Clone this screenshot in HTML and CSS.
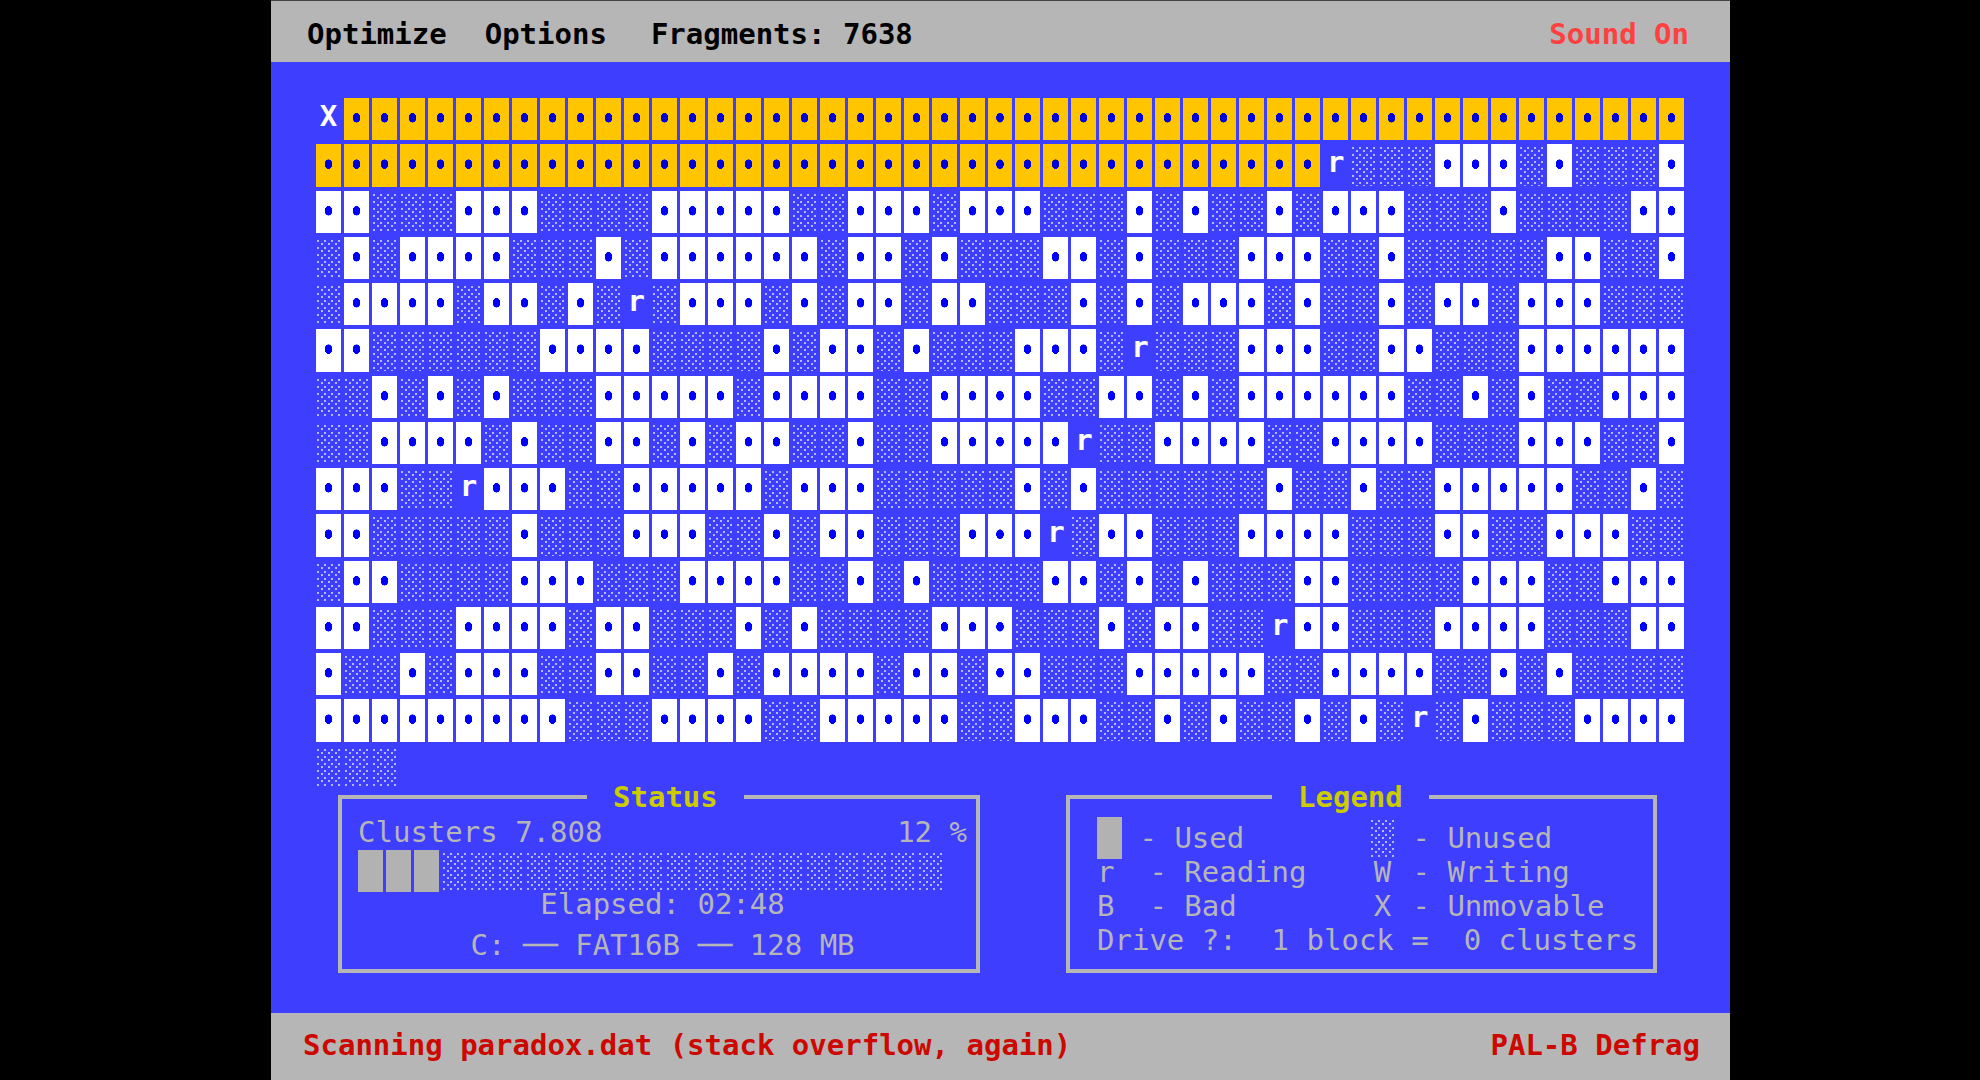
FILE: index.html
```html
<!DOCTYPE html>
<html lang="en">
<head>
  <meta charset="UTF-8">
  <meta name="viewport" content="width=device-width, initial-scale=1.0">
  <title>PAL-B Defrag</title>
  <link rel="stylesheet" href="styles.css">
</head>
<body>
  <div class="screen">
    <header class="bar topbar">
      <nav class="menu">
        <button type="button">Optimize</button>
        <button type="button">Options</button>
      </nav>
      <span class="fragments">Fragments: 7638</span>
      <button type="button" class="sound">Sound On</button>
    </header>

    <main>
      <div class="map" id="map"></div>

      <div class="panels">
        <fieldset class="panel status">
          <legend>Status</legend>
          <div class="clusters">
            <span>Clusters 7.808</span>
            <span>12 %</span>
          </div>
          <div class="progress" id="progress"></div>
          <p class="elapsed">Elapsed: 02:48</p>
          <p class="drive">C: ── FAT16B ── 128 MB</p>
        </fieldset>

        <fieldset class="panel keys">
          <legend>Legend</legend>
          <ul class="key-list">
            <li><span class="block full"></span> - Used</li>
            <li><span class="key"><span class="block unused"></span></span> - Unused</li>
            <li>r  - Reading</li>
            <li><span class="key">W</span> - Writing</li>
            <li>B  - Bad</li>
            <li><span class="key">X</span> - Unmovable</li>
          </ul>
          <p class="scale">Drive ?:  1 block =  0 clusters</p>
        </fieldset>
      </div>
    </main>

    <footer class="bar bottombar">
      <span>Scanning paradox.dat (stack overflow, again)</span>
      <span>PAL-B Defrag</span>
    </footer>
  </div>

  <script src="script.js"></script>
</body>
</html>
```
FILE: styles.css
```css
* {
  box-sizing: border-box;
}
body {
  margin: 0;
  padding: 0 250px 0 271px;
  background: #000;
  color: #b6b6b6;
  font-family: "DejaVu Sans Mono", monospace;
  font-size: 29px;
  line-height: 34px;
}
p, ul {
  margin: 0;
  padding: 0;
}
button {
  padding: 0;
  border: none;
  background: none;
  color: inherit;
  font: inherit;
  cursor: pointer;
}
.screen {
  display: flex;
  flex-direction: column;
  min-height: 100vh;
  background: #3e3eff;
}

/* top and bottom bars */
.bar {
  display: flex;
  align-items: center;
  background: #b6b6b6;
  font-weight: bold;
  white-space: nowrap;
}
.topbar {
  height: 62px;
  padding: 4px 41px 0 36px;
  border-top: 1px solid #444;
  color: #000;
}
.menu {
  display: flex;
  gap: 38px;
}
.fragments {
  margin-left: 44px;
}
.sound {
  margin-left: auto;
  color: #ff4040;
}
.bottombar {
  justify-content: space-between;
  height: 67px;
  padding: 0 30px 4px 32px;
  color: #cc0800;
}

main {
  flex: 1;
  display: flex;
  flex-direction: column;
  padding: 36px 0 40px;
}

/* disk map */
.map {
  flex: 1;
  display: grid;
  grid-template-columns: repeat(49, 1fr);
  grid-template-rows: repeat(15, 1fr);
  gap: 4px 3px;
  padding: 0 46px 0 45px;
}
.block {
  display: block;
  min-width: 0;
  min-height: 42px;
}
.used {
  background: radial-gradient(4px 5px at 50% 47%, #0000ff 90%, transparent) #fff;
}
.done {
  background: radial-gradient(4px 5px at 50% 47%, #0000d8 90%, transparent) #ffc600;
}
.unused {
  padding: 3px 0 1px 1px;
  background:
    radial-gradient(circle at 1px 1px, #b8b8ff 1px, transparent 1px) 0 0 / 7px 7px content-box,
    radial-gradient(circle at 5px 4px, #b8b8ff 1px, transparent 1px) 0 0 / 7px 7px content-box;
}
.full {
  background: #b2b2b2;
}
.letter {
  color: #fff;
  font-weight: bold;
  line-height: 36px;
  text-align: center;
}

/* status and legend boxes */
.panels {
  display: grid;
  grid-template-columns: 642fr 591fr;
  gap: 86px;
  margin-top: -3px;
  padding: 0 73px 0 67px;
}
.panel {
  min-width: 0;
  margin: 0;
  border: 4px solid #b6b6b6;
}
.panel legend {
  padding: 0 26px;
  color: #cccc00;
  font-weight: bold;
  line-height: 24px;
}
.panel span, .panel p, .panel li {
  white-space: pre;
}
.status {
  padding: 7px 9px 12px 16px;
}
.status legend {
  margin-left: 229px;
}
.clusters {
  display: flex;
  justify-content: space-between;
  line-height: 32px;
}
.progress {
  display: grid;
  grid-template-columns: repeat(21, 25px);
  gap: 3px;
  margin-top: 2px;
}
.elapsed, .drive {
  line-height: 24px;
  text-align: center;
}
.drive {
  margin-top: 17px;
}
.keys {
  padding: 12px 0 11px 27px;
}
.keys legend {
  margin-left: 175px;
}
.key-list {
  display: grid;
  grid-template-columns: 273px 1fr;
  list-style: none;
}
.key-list li {
  display: flex;
  height: 34px;
}
.key-list .block {
  width: 25px;
  height: 42px;
  margin: -4px 0;
}
.key {
  width: 25px;
  text-align: center;
}

@media (max-width: 1500px) {
  body {
    padding: 0;
  }
}
```
FILE: script.js
```javascript
// y = optimized, # = used, . = unused, letters are drawn as they are
const rows = [
  "X" + "y".repeat(48),
  "y".repeat(36) + "r...###.#...#",
  "##...###....#####..###.##" + "#...#.#..#.###...#....##",
  ".#.####...#.######.##.#.." + ".##.#...###..#.....##..#",
  ".####.##.#.r.###.#.##.##." + "..#.#.###.#..#.##.###...",
  "##......####....#.##.#..." + "###.r...###..##...######",
  "..#.#.#...#####.####..###" + "#..##.#.######..#.#..###",
  "..####.#..##.#.##..#..###" + "##r..####..####...###..#",
  "###..r###..#####.###....." + "#.#......#..#..#####..#.",
  "##.....#...###..#.##...##" + "#r.##...####...##..###..",
  ".##....###...####..#.#..." + ".##.#.#...##....###..###",
  "##...####.##...#.#....###" + "...#.##..r##...####...##",
  "#..#.###..##..#.####.##.#" + "#...#####..####..#.#....",
  "#########...####..#####.." + "###..#.#..#.#.r.#...####",
  "..."
];

const types = { "y": "done", "#": "used", ".": "unused", "=": "full" };

// Function to add one block to a container
function addBlock(parent, char) {
  const block = document.createElement("span");
  block.className = "block " + (types[char] || "letter");
  if (!types[char]) {
    block.textContent = char;
  }
  parent.appendChild(block);
}

const map = document.getElementById("map");
for (const char of rows.join("")) {
  addBlock(map, char);
}

const progress = document.getElementById("progress");
for (let i = 0; i < 21; i++) {
  addBlock(progress, i < 3 ? "=" : ".");
}
```
